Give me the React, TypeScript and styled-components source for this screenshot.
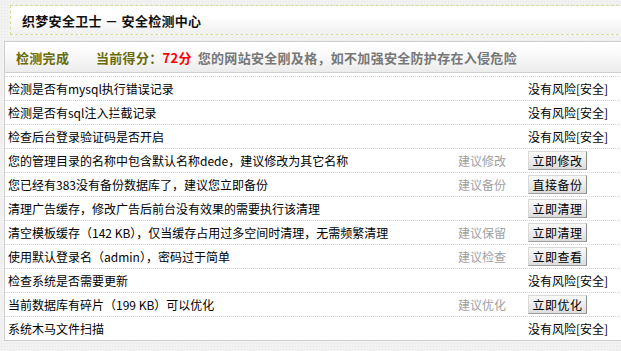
import React from 'react';
import styled, { createGlobalStyle } from 'styled-components';

type Check = {
  label: React.ReactNode;
  advice?: string;
  action?: string;
};

const checks: Check[] = [
  { label: '检测是否有mysql执行错误记录' },
  { label: '检测是否有sql注入拦截记录' },
  { label: '检查后台登录验证码是否开启' },
  { label: '您的管理目录的名称中包含默认名称dede，建议修改为其它名称', advice: '建议修改', action: '立即修改' },
  { label: '您已经有383没有备份数据库了，建议您立即备份', advice: '建议备份', action: '直接备份' },
  { label: '清理广告缓存，修改广告后前台没有效果的需要执行该清理', action: '立即清理' },
  { label: '清空模板缓存（142 KB），仅当缓存占用过多空间时清理，无需频繁清理', advice: '建议保留', action: '立即清理' },
  { label: '使用默认登录名（admin），密码过于简单', advice: '建议检查', action: '立即查看' },
  { label: '检查系统是否需要更新' },
  { label: '当前数据库有碎片（199 KB）可以优化', advice: '建议优化', action: '立即优化' },
  { label: '系统木马文件扫描' },
];

const GlobalStyle = createGlobalStyle`
  html, body {
    margin: 0;
    padding: 0;
    overflow: hidden;
  }
  body {
    background-color: #f2f2f2;
    background-image: radial-gradient(#e6e6e6 0.6px, transparent 0.7px);
    background-size: 3px 3px;
    font-family: "Noto Sans CJK SC", "Liberation Sans", sans-serif;
    font-size: 12px;
    color: #000;
  }
`;

const Page = styled.div`
  width: 640px;
  padding: 5px 0 0 4px;
  display: flex;
  flex-direction: column;
  gap: 6px;
`;

const TitleBar = styled.div`
  margin-left: 6px;
  height: 28px;
  display: flex;
  align-items: center;
  padding-left: 11px;
  border: 1px dashed #d6df9a;
  border-right: none;
  background: linear-gradient(#ffffff, #ffffff 40%, #f0f0f0);
`;

const Title = styled.h1`
  margin: 0;
  font-size: 13px;
  font-weight: bold;
  letter-spacing: 0.3px;
  color: #111;
`;

const Panel = styled.div`
  border: 1px solid #cfcfcf;
  border-right: none;
  background: #fff;
`;

const PanelHead = styled.div`
  height: 30px;
  display: flex;
  align-items: center;
  padding-left: 11px;
  border-bottom: 1px solid #cfcfcf;
  background: linear-gradient(#ffffff, #fafafa 40%, #ececec);
  font-size: 13px;
  font-weight: bold;
  letter-spacing: 0.3px;
`;

const Status = styled.span`
  color: #6a6a06;
  width: 80px;
`;

const ScoreLabel = styled.span`
  color: #6a6a06;
`;

const Score = styled.span`
  color: #ff0000;
  margin-right: 6px;
`;

const Verdict = styled.span`
  color: #777;
`;

const List = styled.div`
  padding-top: 3px;
`;

const Row = styled.div`
  display: grid;
  grid-template-columns: 1fr 70px 116px;
  align-items: center;
  height: 23px;
  padding-left: 3px;
  border-top: 1px dotted #c8dca6;
`;

const Label = styled.span`
  white-space: nowrap;
  overflow: hidden;
`;

const Advice = styled.span`
  color: #a0a0a0;
`;

const Safe = styled.span`
  grid-column: 3;
`;

const ActionButton = styled.button`
  grid-column: 3;
  justify-self: start;
  width: 59px;
  height: 19px;
  padding: 0;
  font-family: inherit;
  font-size: 12px;
  line-height: 17px;
  color: #000;
  letter-spacing: 0.5px;
  border: 1px solid #d8d8d8;
  border-right-color: #8c8c8c;
  border-bottom-color: #9c9c9c;
  background: linear-gradient(#fafafa, #e9e9e9 60%, #dcdcdc);
  cursor: pointer;
`;

const App = () => (
  <>
    <GlobalStyle />
    <Page>
      <TitleBar>
        <Title>织梦安全卫士 － 安全检测中心</Title>
      </TitleBar>
      <Panel>
        <PanelHead>
          <Status>检测完成</Status>
          <ScoreLabel>当前得分：</ScoreLabel>
          <Score>72分</Score>
          <Verdict>您的网站安全刚及格，如不加强安全防护存在入侵危险</Verdict>
        </PanelHead>
        <List>
          {checks.map((c, i) => (
            <Row key={i}>
              <Label>{c.label}</Label>
              {c.advice ? <Advice>{c.advice}</Advice> : <span />}
              {c.action ? <ActionButton>{c.action}</ActionButton> : <Safe>没有风险[安全]</Safe>}
            </Row>
          ))}
        </List>
      </Panel>
    </Page>
  </>
);

export default App;
